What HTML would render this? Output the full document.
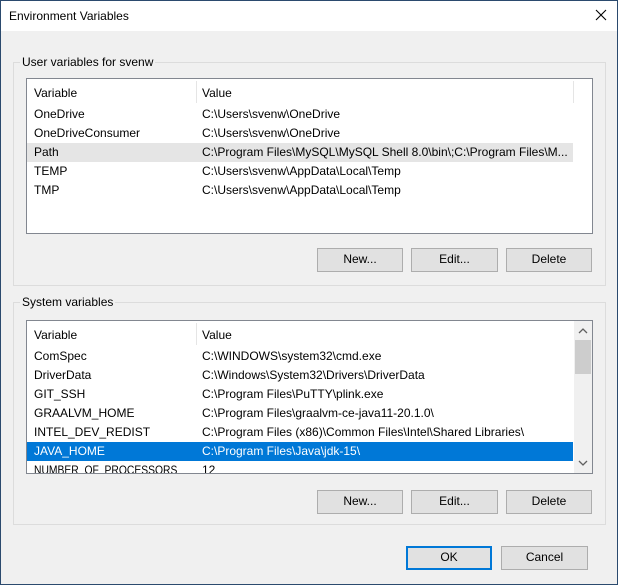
<!DOCTYPE html>
<html><head><style>
*{margin:0;padding:0;box-sizing:border-box}
body{width:618px;height:585px;overflow:hidden;font-family:"Liberation Sans",sans-serif;font-size:12px;color:#000;background:#f0f0f0;position:relative}
.abs{position:absolute}
.win{left:0;top:0;width:618px;height:585px;border:1px solid #2b4a6e}
.title{left:1px;top:1px;width:616px;height:30px;background:#fff}
.t{white-space:nowrap;line-height:14px}
.grp{border:1px solid #dcdcdc}
.lbl{background:#f0f0f0;padding:0 2px}
.list{background:#fff;border:1px solid #828790;overflow:hidden}
.btn{background:#e1e1e1;border:1px solid #adadad;text-align:center;line-height:21px}
.row{position:absolute;left:0;height:19px;width:546px}
.row span{position:absolute;top:2px;white-space:nowrap}
</style></head><body>
<div class="abs win"></div>
<div class="abs title"></div>
<div class="abs t" style="left:9px;top:9px">Environment Variables</div>
<svg class="abs" style="left:595px;top:9px" width="12" height="12"><path d="M1 1L11 11M11 1L1 11" stroke="#000" stroke-width="1.1"/></svg>

<div class="abs grp" style="left:13px;top:62px;width:593px;height:224px"></div>
<div class="abs t lbl" style="left:20px;top:55px">User variables for svenw</div>
<div class="abs list" style="left:26px;top:78px;width:567px;height:156px">
 <div class="abs" style="left:169px;top:2px;width:1px;height:22px;background:#e5e5e5"></div>
 <div class="abs" style="left:546px;top:2px;width:1px;height:22px;background:#e5e5e5"></div>
 <div class="row" style="top:5px"><span style="left:7px">Variable</span><span style="left:175px">Value</span></div>
 <div class="row" style="top:26px"><span style="left:7px">OneDrive</span><span style="left:175px">C:\Users\svenw\OneDrive</span></div>
 <div class="row" style="top:45px"><span style="left:7px">OneDriveConsumer</span><span style="left:175px">C:\Users\svenw\OneDrive</span></div>
 <div class="row" style="top:64px;background:#e5e5e5"><span style="left:7px">Path</span><span style="left:175px">C:\Program Files\MySQL\MySQL Shell 8.0\bin\;C:\Program Files\M...</span></div>
 <div class="row" style="top:83px"><span style="left:7px">TEMP</span><span style="left:175px">C:\Users\svenw\AppData\Local\Temp</span></div>
 <div class="row" style="top:102px"><span style="left:7px">TMP</span><span style="left:175px">C:\Users\svenw\AppData\Local\Temp</span></div>
</div>
<div class="abs btn" style="left:317px;top:248px;width:86px;height:24px">New...</div>
<div class="abs btn" style="left:411px;top:248px;width:87px;height:24px">Edit...</div>
<div class="abs btn" style="left:506px;top:248px;width:86px;height:24px">Delete</div>

<div class="abs grp" style="left:13px;top:302px;width:593px;height:223px"></div>
<div class="abs t lbl" style="left:20px;top:295px">System variables</div>
<div class="abs list" style="left:26px;top:320px;width:567px;height:154px">
 <div class="abs" style="left:169px;top:2px;width:1px;height:22px;background:#e5e5e5"></div>
 <div class="row" style="top:5px"><span style="left:7px">Variable</span><span style="left:175px">Value</span></div>
 <div class="row" style="top:26px"><span style="left:7px">ComSpec</span><span style="left:175px">C:\WINDOWS\system32\cmd.exe</span></div>
 <div class="row" style="top:45px"><span style="left:7px">DriverData</span><span style="left:175px">C:\Windows\System32\Drivers\DriverData</span></div>
 <div class="row" style="top:64px"><span style="left:7px">GIT_SSH</span><span style="left:175px">C:\Program Files\PuTTY\plink.exe</span></div>
 <div class="row" style="top:83px"><span style="left:7px">GRAALVM_HOME</span><span style="left:175px">C:\Program Files\graalvm-ce-java11-20.1.0\</span></div>
 <div class="row" style="top:102px"><span style="left:7px">INTEL_DEV_REDIST</span><span style="left:175px">C:\Program Files (x86)\Common Files\Intel\Shared Libraries\</span></div>
 <div class="row" style="top:121px;background:#0078d7;color:#fff"><span style="left:7px">JAVA_HOME</span><span style="left:175px">C:\Program Files\Java\jdk-15\</span></div>
 <div class="row" style="top:140px"><span style="left:7px;transform:scaleX(0.86);transform-origin:left">NUMBER_OF_PROCESSORS</span><span style="left:175px">12</span></div>
 <div class="abs" style="left:547px;top:0;width:18px;height:152px;background:#f0f0f0"></div>
 <div class="abs" style="left:548px;top:19px;width:16px;height:34px;background:#cdcdcd"></div>
 <svg class="abs" style="left:551px;top:6px" width="10" height="8"><path d="M1 6L5 2L9 6" stroke="#606060" fill="none" stroke-width="1.3"/></svg>
 <svg class="abs" style="left:551px;top:138px" width="10" height="8"><path d="M1 2L5 6L9 2" stroke="#606060" fill="none" stroke-width="1.3"/></svg>
</div>
<div class="abs btn" style="left:317px;top:490px;width:86px;height:24px">New...</div>
<div class="abs btn" style="left:411px;top:490px;width:87px;height:24px">Edit...</div>
<div class="abs btn" style="left:506px;top:490px;width:86px;height:24px">Delete</div>

<div class="abs btn" style="left:406px;top:546px;width:86px;height:24px;border:2px solid #0078d7;line-height:19px">OK</div>
<div class="abs btn" style="left:501px;top:546px;width:87px;height:24px">Cancel</div>
</body></html>
